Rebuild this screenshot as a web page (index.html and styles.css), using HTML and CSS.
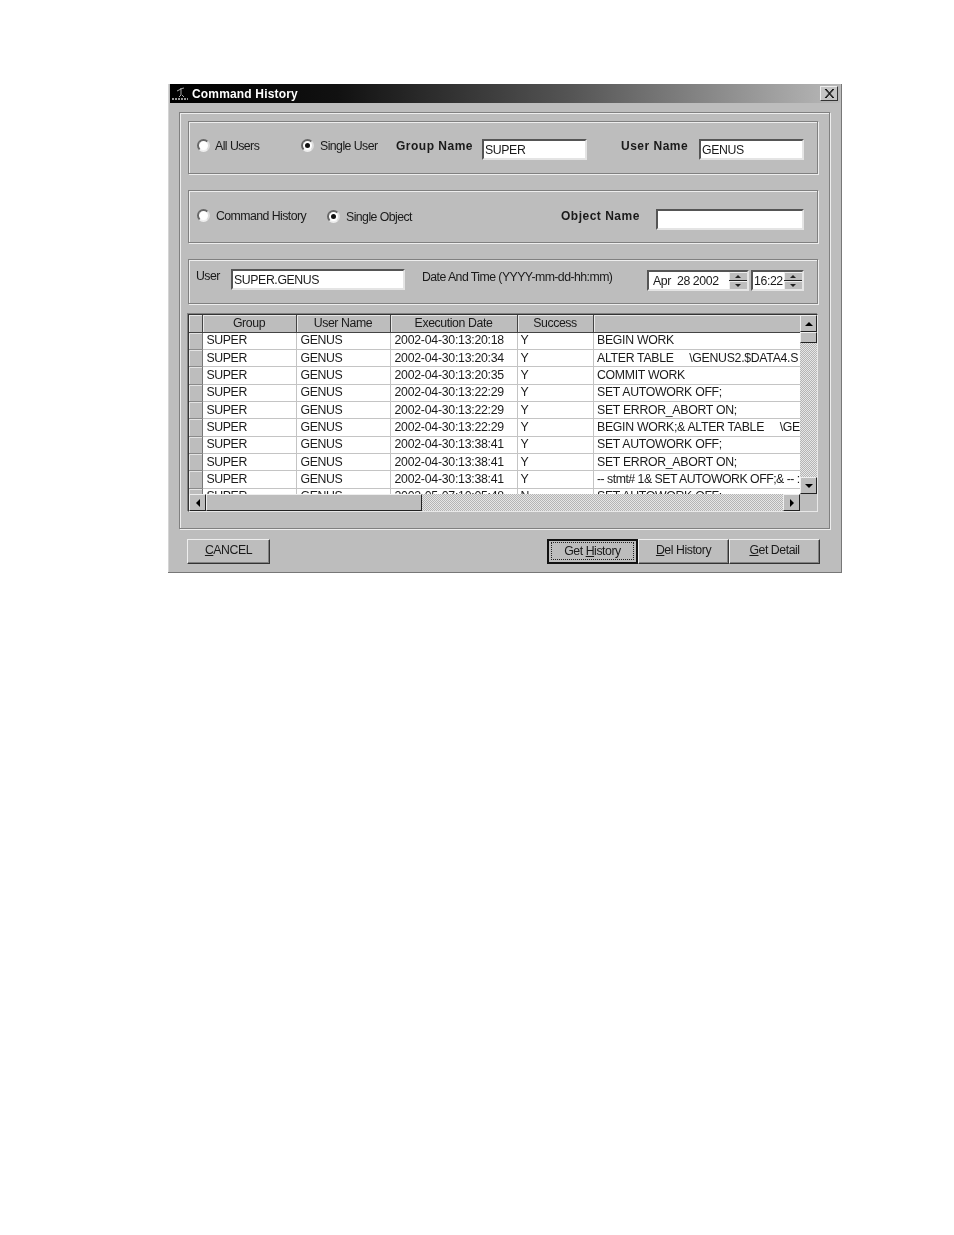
FILE: index.html
```html
<!DOCTYPE html>
<html lang="en">
<head>
    <meta charset="UTF-8">
    <title>Command History</title>
    <link rel="stylesheet" href="styles.css">
</head>
<body>
    <div class="window">
        <div class="titlebar">
            <svg class="app-icon" width="18" height="16" viewBox="0 0 18 16">
                <path d="M9 3 L13 2 M10 3 L10 9 M10 9 L8 11 M11 9 L13 11 M6 5 L10 3" stroke="#aaa" stroke-width="1" fill="none"/>
                <path d="M1 13 H17" stroke="#999" stroke-width="2" stroke-dasharray="2 1" fill="none"/>
            </svg>
            <span class="title-text">Command History</span>
            <div class="close-btn">
                <svg width="10" height="9" viewBox="0 0 10 9"><path d="M1 0 L9 9 M2 0 L10 9 M9 0 L1 9 M10 0 L2 9" stroke="#111" stroke-width="1"/></svg>
            </div>
        </div>

        <div class="outer-panel">
            <div class="panel panel-user">
                <span class="radio"></span><span class="opt opt-all">All Users</span>
                <span class="radio checked"></span><span class="opt opt-single">Single User</span>
                <span class="bold-label lbl-group">Group Name</span>
                <div class="field field-name">SUPER</div>
                <span class="bold-label lbl-user">User Name</span>
                <div class="field field-name">GENUS</div>
            </div>

            <div class="panel panel-object">
                <span class="radio"></span><span class="opt opt-cmd">Command History</span>
                <span class="radio checked low"></span><span class="opt opt-obj">Single Object</span>
                <span class="bold-label lbl-object">Object Name</span>
                <div class="field field-object"></div>
            </div>

            <div class="panel panel-date">
                <span class="opt opt-usr">User</span>
                <div class="field field-user">SUPER.GENUS</div>
                <span class="opt opt-date">Date And Time (YYYY-mm-dd-hh:mm)</span>
                <div class="field field-spin spin-date">
                    <span class="spin-text">Apr&nbsp; 28 2002</span>
                    <div class="spin"><span class="spin-up"></span><span class="spin-down"></span></div>
                </div>
                <div class="field field-spin spin-time">
                    <span class="spin-text">16:22</span>
                    <div class="spin"><span class="spin-up"></span><span class="spin-down"></span></div>
                </div>
            </div>

            <div class="grid">
                <div class="grid-view">
                    <table>
                        <colgroup>
                            <col class="c-head"><col class="c-group"><col class="c-group"><col class="c-date"><col class="c-ok"><col class="c-cmd">
                        </colgroup>
                        <thead>
                            <tr><th></th><th>Group</th><th>User Name</th><th>Execution Date</th><th>Success</th><th></th></tr>
                        </thead>
                        <tbody id="rows"></tbody>
                    </table>
                </div>
                <div class="vscroll">
                    <div class="sb-btn sb-v"><span class="arrow up"></span></div>
                    <div class="sb-thumb v-thumb"></div>
                    <div class="sb-track"></div>
                    <div class="sb-btn sb-v"><span class="arrow down"></span></div>
                </div>
                <div class="hscroll">
                    <div class="sb-btn sb-h"><span class="arrow left"></span></div>
                    <div class="sb-thumb h-thumb"></div>
                    <div class="sb-track"></div>
                    <div class="sb-btn sb-h"><span class="arrow right"></span></div>
                </div>
                <div class="corner"></div>
            </div>
        </div>

        <div class="footer">
            <button class="btn btn-cancel"><u>C</u>ANCEL</button>
            <div class="btn-group">
                <button class="btn btn-default"><span class="focus">Get <u>H</u>istory</span></button>
                <button class="btn"><u>D</u>el History</button>
                <button class="btn"><u>G</u>et Detail</button>
            </div>
        </div>
    </div>

    <script>
        const historial = [
            ['2002-04-30:13:20:18', 'Y', 'BEGIN WORK'],
            ['2002-04-30:13:20:34', 'Y', 'ALTER TABLE     \\GENUS2.$DATA4.S'],
            ['2002-04-30:13:20:35', 'Y', 'COMMIT WORK'],
            ['2002-04-30:13:22:29', 'Y', 'SET AUTOWORK OFF;'],
            ['2002-04-30:13:22:29', 'Y', 'SET ERROR_ABORT ON;'],
            ['2002-04-30:13:22:29', 'Y', 'BEGIN WORK;& ALTER TABLE     \\GE'],
            ['2002-04-30:13:38:41', 'Y', 'SET AUTOWORK OFF;'],
            ['2002-04-30:13:38:41', 'Y', 'SET ERROR_ABORT ON;'],
            ['2002-04-30:13:38:41', 'Y', '-- stmt# 1& SET AUTOWORK OFF;& -- :'],
            ['2002-05-07:10:05:48', 'N', 'SET AUTOWORK OFF;']
        ];

        const rows = document.getElementById('rows');
        historial.forEach(function (fila) {
            const tr = document.createElement('tr');
            const cmdClass = fila[2].startsWith('--') ? 'cmd stmt' : 'cmd';
            tr.innerHTML = `<td class="row-head"></td><td>SUPER</td><td>GENUS</td><td class="when">${fila[0]}</td><td class="ok">${fila[1]}</td><td class="${cmdClass}"><div>${fila[2]}</div></td>`;
            rows.appendChild(tr);
        });
    </script>
</body>
</html>
```

FILE: styles.css
```css
* {
    box-sizing: border-box;
}
html, body {
    margin: 0;
    height: 1235px;
    overflow: hidden;
    background: #fff;
}
body {
    padding: 84px 0 0 168px;
    font-family: "Liberation Sans", Arial, sans-serif;
    font-size: 12.3px;
    letter-spacing: -.4px;
    color: #1a1a1a;
}
.window {
    width: 674px;
    height: 489px;
    background: #bdbdbd;
    border-right: 1px solid #777;
    border-bottom: 1px solid #777;
    box-shadow: inset 1px 0 0 #d4d4d4;
    filter: blur(0.3px);
}
.titlebar {
    height: 19px;
    margin: 0 1px 0 2px;
    display: flex;
    align-items: center;
    background: linear-gradient(to right, #000 0%, #111 25%, #555 60%, #b8b8b8 100%);
}
.app-icon {
    margin: 1px 3px 0 1px;
    flex: none;
}
.title-text {
    color: #fff;
    font-size: 12px;
    font-weight: bold;
    letter-spacing: .17px;
}
.close-btn {
    margin-left: auto;
    margin-right: 2px;
    width: 18px;
    height: 15px;
    display: flex;
    align-items: center;
    justify-content: center;
    background: #c4c4c4;
    border: 1px solid;
    border-color: #eee #333 #333 #eee;
}

.outer-panel {
    width: 651px;
    height: 417px;
    margin: 9px 0 0 11px;
    padding: 8px 11px 0 8px;
    border: 1px solid #808080;
    box-shadow: 1px 1px 0 #eee, inset 1px 1px 0 #eee;
}
.panel {
    display: flex;
    align-items: center;
    width: 630px;
    border: 1px solid #808080;
    box-shadow: 1px 1px 0 #eee, inset 1px 1px 0 #eee;
}
.panel-user {
    height: 53px;
    padding: 0 0 0 8px;
}
.panel-object {
    height: 53px;
    margin-top: 16px;
    padding: 0 0 0 8px;
}
.panel-date {
    height: 45px;
    margin-top: 16px;
    padding: 0 0 0 7px;
}

.radio {
    flex: none;
    position: relative;
    width: 13px;
    height: 13px;
    margin: 0 5px 4px 0;
    border-radius: 50%;
    background: #fff;
    border: 2px solid;
    border-color: #666 #ddd #eee #666;
}
.radio.checked {
    margin-right: 6px;
}
.panel-object .radio {
    margin-bottom: 2px;
}
.panel-object .radio.low {
    margin-bottom: 0;
}
.radio.checked::after {
    content: "";
    position: absolute;
    left: 2px;
    top: 2px;
    width: 5px;
    height: 5px;
    border-radius: 50%;
    background: #111;
}
.opt {
    flex: none;
    margin-bottom: 4px;
    letter-spacing: -.55px;
    white-space: nowrap;
}
.opt-all { width: 86px; }
.opt-single { width: 76px; }
.opt-cmd { width: 111px; margin: 0 0 2px 1px; }
.opt-obj { width: 215px; margin: 0; }
.opt-usr { width: 35px; margin-bottom: 11px; }
.opt-date { width: 225px; margin: 0 0 9px 17px; }

.bold-label {
    flex: none;
    font-size: 12px;
    font-weight: bold;
    letter-spacing: .5px;
    white-space: nowrap;
    margin-bottom: 3px;
}
.lbl-group { width: 86px; }
.lbl-user { width: 78px; margin-left: 34px; }
.lbl-object { width: 95px; margin-bottom: 2px; }

.field {
    flex: none;
    height: 21px;
    padding: 2px 0 0 1px;
    background: #fff;
    border: 2px solid;
    border-color: #555 #e4e4e4 #e4e4e4 #555;
    white-space: nowrap;
    overflow: hidden;
}
.panel-user .field { margin-top: 4px; }
.field-name { width: 105px; }
.field-object { width: 148px; margin-top: 5px; }
.field-user { width: 174px; margin-bottom: 4px; }

.field-spin {
    display: flex;
    margin-bottom: 3px;
    padding: 0;
}
.spin-date { width: 102px; }
.spin-time { width: 53px; margin-left: 2px; }
.spin-text {
    flex: 1;
    padding: 2px 0 0 4px;
}
.spin-time .spin-text {
    padding-left: 1px;
}
.spin {
    flex: none;
    width: 18px;
    display: flex;
    flex-direction: column;
}
.spin-up, .spin-down {
    flex: 1;
    position: relative;
    background: #bdbdbd;
    box-shadow: inset 1px 1px 0 #eee;
}
.spin-up {
    border-bottom: 1px solid #222;
}
.spin-up::after, .spin-down::after {
    content: "";
    position: absolute;
    left: 6px;
    top: 3px;
    border-left: 3px solid transparent;
    border-right: 3px solid transparent;
}
.spin-up::after { border-bottom: 3px solid #222; }
.spin-down::after { border-top: 3px solid #222; }

.grid {
    width: 630px;
    height: 198px;
    margin-top: 10px;
    display: grid;
    grid-template-columns: 611px 17px;
    grid-template-rows: 179px 17px;
    border-top: 1px solid #333;
    border-left: 1px solid #333;
    border-right: 1px solid #e8e8e8;
    border-bottom: 1px solid #e8e8e8;
    box-shadow: -1px -1px 0 #808080;
}
.grid-view {
    overflow: hidden;
    background: #bdbdbd;
}
table {
    border-collapse: collapse;
    table-layout: fixed;
    width: 611px;
}
.c-head { width: 13px; }
.c-group { width: 94px; }
.c-date { width: 127px; }
.c-ok { width: 76px; }
.c-cmd { width: 207px; }
th {
    height: 17px;
    padding: 0;
    font-weight: normal;
    text-align: center;
    background: #bdbdbd;
    border-right: 1px solid #444;
    border-bottom: 1px solid #444;
    box-shadow: inset 1px 1px 0 #e8e8e8;
}
td {
    height: 17.35px;
    padding: 0 0 0 3px;
    background: #fff;
    border-right: 1px solid #c4c4c4;
    border-bottom: 1px solid #c4c4c4;
    white-space: nowrap;
    overflow: hidden;
    line-height: 15px;
}
td:nth-child(2), td:nth-child(3), td:nth-child(4) {
    padding-left: 4px;
}
td.when {
    letter-spacing: -.25px;
}
td.cmd {
    padding-left: 3.5px;
    letter-spacing: -.3px;
}
td.cmd div {
    white-space: pre;
    overflow: hidden;
    width: 203px;
}
td.stmt {
    letter-spacing: -.5px;
}
td.row-head {
    background: #bdbdbd;
    border-right: 1px solid #777;
    border-bottom: 1px solid #8a8a8a;
    box-shadow: inset 1px 1px 0 #e4e4e4;
}

.vscroll, .hscroll {
    display: flex;
}
.vscroll {
    flex-direction: column;
}
.sb-btn, .sb-thumb {
    flex: none;
    display: flex;
    align-items: center;
    justify-content: center;
    background: #bdbdbd;
    border: 1px solid;
    border-color: #eee #222 #222 #eee;
}
.sb-v {
    height: 17px;
}
.sb-h {
    width: 17px;
}
.v-thumb {
    height: 11px;
}
.h-thumb {
    width: 216px;
}
.sb-track {
    flex: 1;
    background: repeating-conic-gradient(#e6e6e6 0 25%, #b4b4b4 0 50%) 0 0 / 2px 2px;
}
.arrow {
    width: 0;
    height: 0;
    border: 4px solid transparent;
}
.arrow.up { border-bottom-color: #000; border-top-width: 0; }
.arrow.down { border-top-color: #000; border-bottom-width: 0; }
.arrow.left { border-right-color: #000; border-left-width: 0; }
.arrow.right { border-left-color: #000; border-right-width: 0; }
.corner {
    background: #bdbdbd;
}

.footer {
    display: flex;
    justify-content: space-between;
    margin: 10px 21px 0 19px;
}
.btn-group {
    display: flex;
}
.btn {
    width: 91px;
    height: 25px;
    padding: 0 0 3px;
    font-family: inherit;
    font-size: 12.3px;
    letter-spacing: -.45px;
    color: #1a1a1a;
    background: #bdbdbd;
    border: 1px solid;
    border-color: #eee #333 #333 #eee;
    box-shadow: inset -1px -1px 0 #808080;
}
.btn-cancel {
    width: 83px;
}
.btn-default {
    width: 91px;
    padding: 0;
    border: 2px solid #111;
    box-shadow: none;
}
.focus {
    display: block;
    margin: 1px 2px 2px;
    padding: 1px 0;
    border: 1px dotted #222;
}
```
